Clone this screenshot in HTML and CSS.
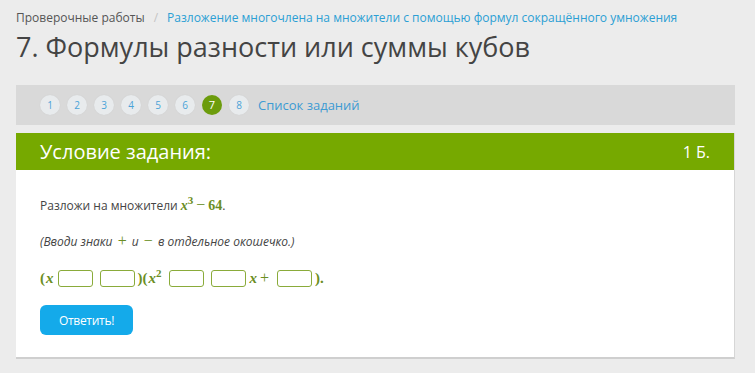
FILE: index.html
```html
<!DOCTYPE html>
<html lang="ru">
<head>
<meta charset="utf-8">
<title>7. Формулы разности или суммы кубов</title>
<link rel="stylesheet" href="styles.css">
</head>
<body>
<div class="page">
  <nav class="crumbs">
    <span class="crumb">Проверочные работы</span>
    <span class="sep">/</span>
    <a class="crumb-link" href="#">Разложение многочлена на множители с помощью формул сокращённого умножения</a>
  </nav>
  <h1 class="title">7. Формулы разности или суммы кубов</h1>

  <div class="pager">
    <a class="num" href="#">1</a>
    <a class="num" href="#">2</a>
    <a class="num" href="#">3</a>
    <a class="num" href="#">4</a>
    <a class="num" href="#">5</a>
    <a class="num" href="#">6</a>
    <a class="num active" href="#">7</a>
    <a class="num" href="#">8</a>
    <a class="list-link" href="#">Список заданий</a>
  </div>

  <div class="task">
    <div class="task-head">
      <span class="task-title">Условие задания:</span>
      <span class="task-score">1 Б.</span>
    </div>
    <div class="task-body">
      <p class="line">Разложи на множители <span class="math"><i>x</i><sup>3</sup><span class="op">−</span><b>64</b></span>.</p>
      <p class="line hint">(Вводи знаки <span class="math"><span class="op">+</span></span> и <span class="math"><span class="op">−</span></span> в отдельное окошечко.)</p>
      <p class="line formula"><span class="math">(<i>x</i><span class="box"></span><span class="box"></span>)(<i>x</i><sup class="sq">2</sup><span class="box"></span><span class="box"></span><i>x</i><span class="op plus">+</span><span class="box"></span>).</span></p>
      <button class="btn" type="button">Ответить!</button>
    </div>
  </div>
</div>
</body>
</html>
```

FILE: styles.css
```css
* { box-sizing: border-box; }
html, body {
  margin: 0;
  padding: 0;
  background: #ececec;
}
body {
  font-family: "Open Sans", "Liberation Sans", sans-serif;
  color: #444;
}
.page {
  width: 719px;
  margin-left: 16px;
  padding-top: 9px;
}
.crumbs {
  font-size: 12px;
  line-height: 18px;
  display: flex;
  gap: 9px;
  white-space: nowrap;
}
.crumb { color: #555; }
.sep { color: #c4c4c4; }
.crumb-link { color: #2b9fd4; text-decoration: none; }
.title {
  margin: 2px 0 0 0;
  font-weight: 400;
  font-size: 27px;
  line-height: 36px;
  color: #444;
}
.pager {
  margin-top: 20px;
  height: 40px;
  background: #d9d9d9;
  display: flex;
  align-items: center;
  padding-left: 24px;
  gap: 7px;
}
.num {
  width: 20px;
  height: 20px;
  border-radius: 50%;
  background: #e8ebed;
  box-shadow: 0 0 1px #c8c8c8;
  color: #4aa3d8;
  font-size: 10px;
  line-height: 20px;
  text-align: center;
  text-decoration: none;
}
.num.active {
  background: #6c9c0c;
  color: #fff;
  box-shadow: none;
  font-size: 11px;
}
.list-link {
  margin-left: 2px;
  color: #3d9bd3;
  font-size: 13px;
  text-decoration: none;
}
.task {
  margin-top: 8px;
  background: #fff;
  border-bottom: 2px solid #cfcfcf;
  border-right: 1px solid #d6d6d6;
}
.task-head {
  height: 37px;
  background: #76a900;
  color: #fff;
  display: flex;
  align-items: center;
  justify-content: space-between;
  padding: 0 24px 0 24px;
}
.task-title { font-size: 20px; }
.task-score { font-size: 16px; }
.task-body {
  padding: 25px 24px 22px 24px;
}
.line {
  margin: 0;
  font-size: 12px;
  line-height: 20px;
  color: #444;
}
.hint {
  margin-top: 15px;
  font-style: italic;
}
.math {
  font-family: "Liberation Serif", "DejaVu Serif", serif;
  color: #6b8e23;
  font-size: 14px;
  font-style: normal;
  font-weight: 700;
}
.math i { font-style: italic; }
.math sup {
  font-size: 11px;
  line-height: 0;
  vertical-align: 6px;
}
.math .op {
  font-weight: 400;
  font-size: 16px;
  margin: 0 3px;
}
.hint .math .op { margin: 0 2px; }
.formula {
  margin-top: 15px;
  height: 22px;
  line-height: 22px;
}
.formula .math { font-size: 15px; }
.formula .math i { margin-left: 1px; }
.formula .math .sq { margin-right: 3px; }
.formula .op.plus { margin: 0 4px 0 3px; }
.box {
  display: inline-block;
  vertical-align: middle;
  width: 35px;
  height: 17px;
  border: 1px solid #8aab3a;
  border-radius: 3px;
  background: #fff;
  margin: -3px 3px 0 4px;
}
.btn {
  margin-top: 16px;
  width: 93px;
  height: 30px;
  border: 0;
  border-radius: 6px;
  background: #14aaea;
  color: #fff;
  font-family: "Open Sans", "Liberation Sans", sans-serif;
  font-size: 12px;
  letter-spacing: -0.3px;
}
```
